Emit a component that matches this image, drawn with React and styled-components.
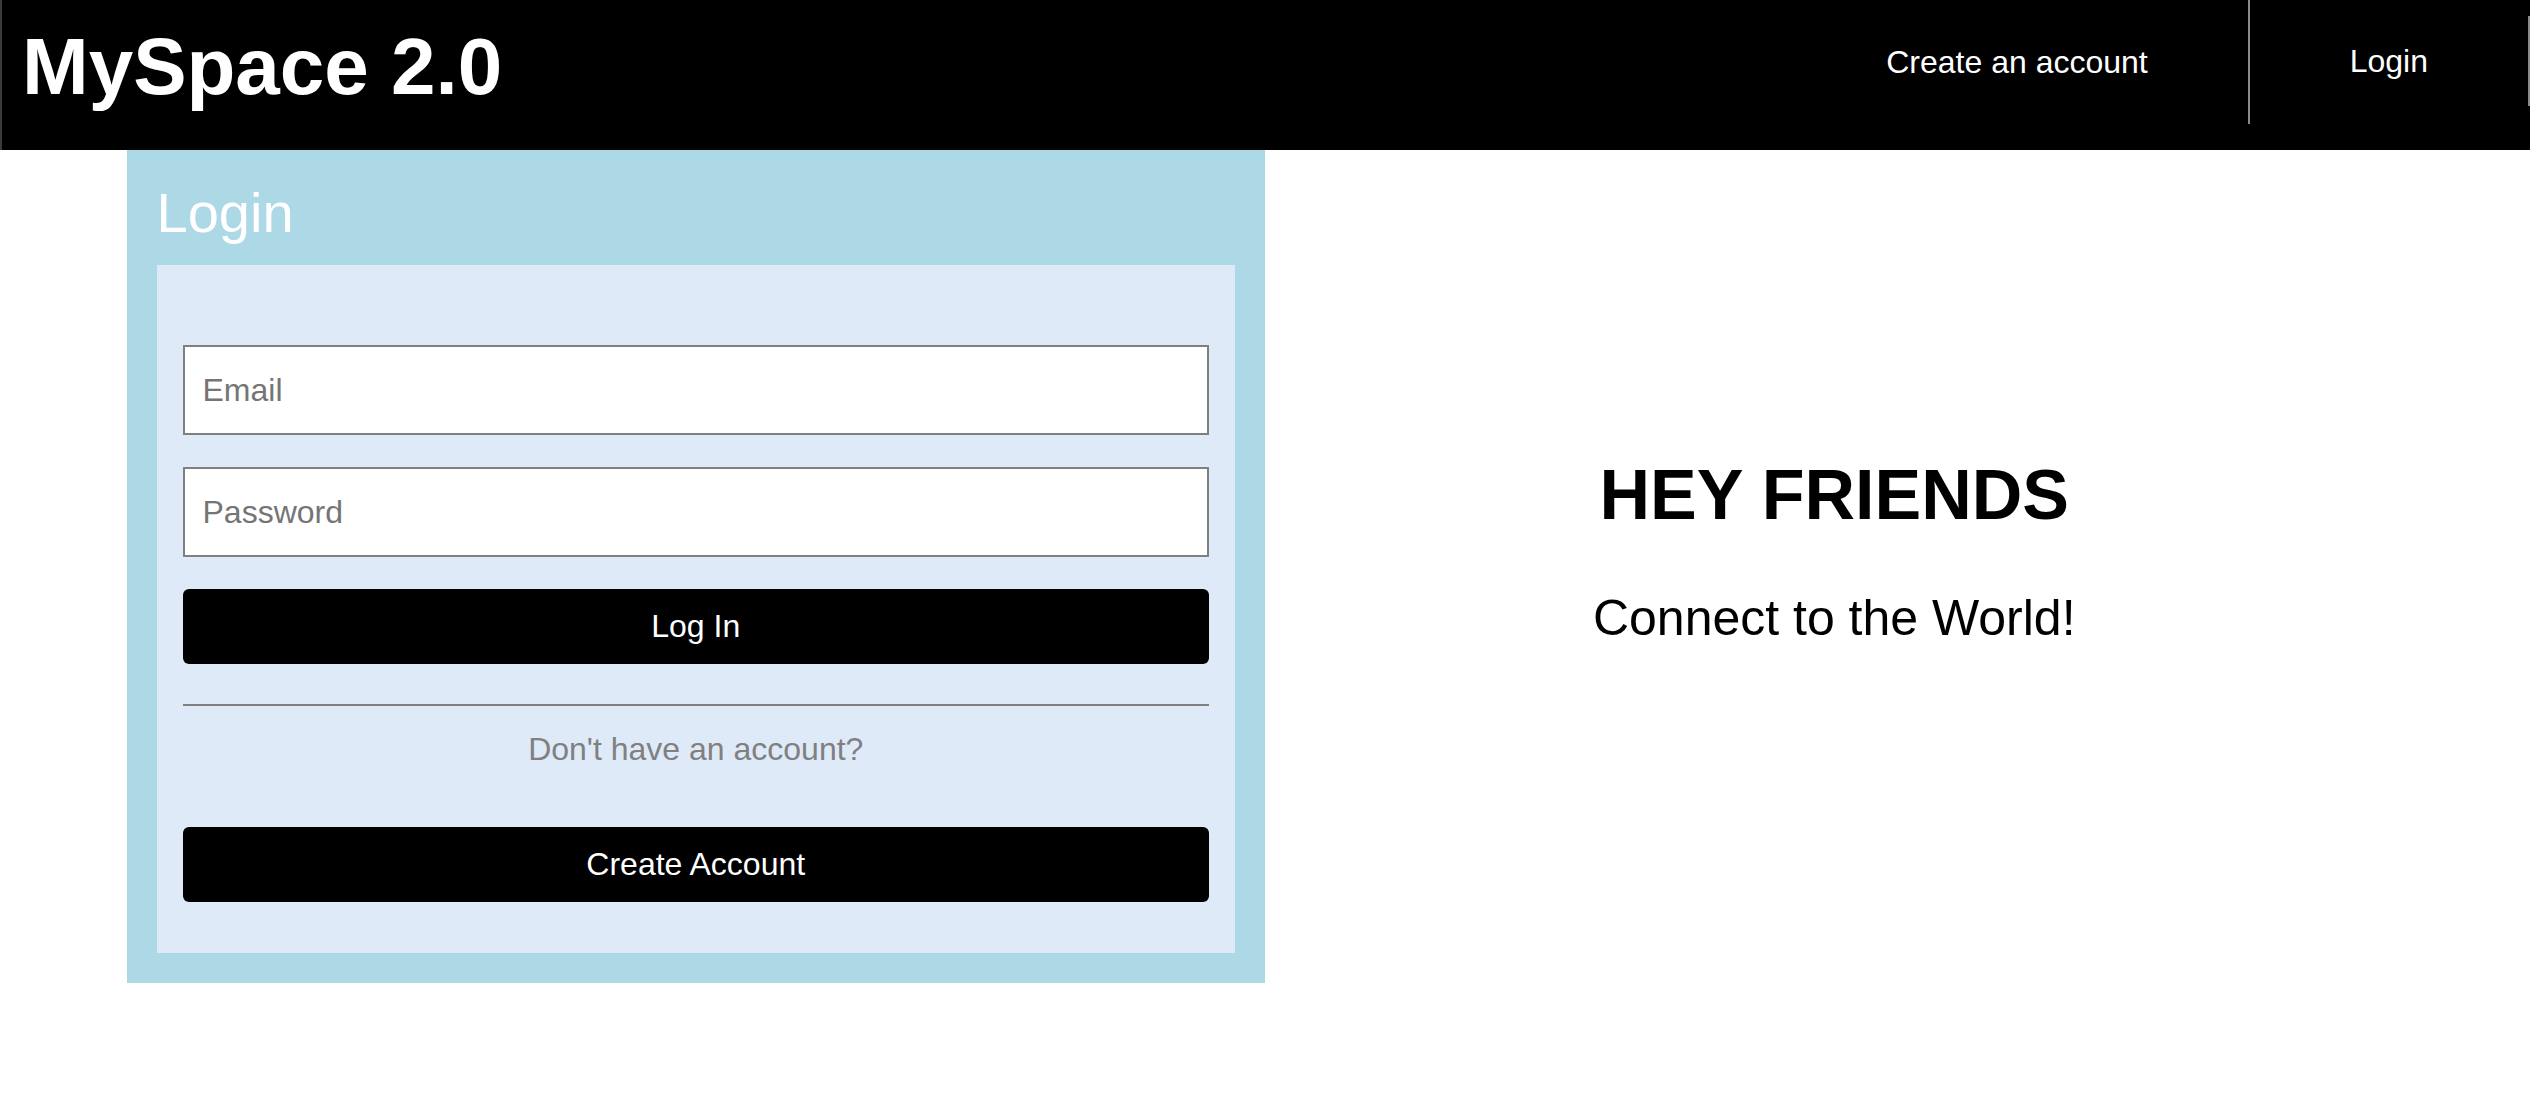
import styled, { createGlobalStyle } from "styled-components";

const GlobalStyle = createGlobalStyle`
  body {
    margin: 0;
    background: #fff;
    font-family: "Liberation Sans", Arial, Helvetica, sans-serif;
  }
  * {
    box-sizing: border-box;
  }
`;

const Header = styled.header`
  display: flex;
  justify-content: space-between;
  align-items: flex-start;
  height: 150px;
  background: #000;
  border-left: 2px solid #3a3a3a;
`;

const Brand = styled.h1`
  margin: 21px 0 0 20px;
  color: #fff;
  font-size: 80px;
  font-weight: 700;
  line-height: normal;
`;

const Nav = styled.nav`
  display: flex;
  align-items: flex-start;
`;

const NavItem = styled.a`
  display: flex;
  align-items: center;
  justify-content: center;
  height: ${(p) => (p.$short ? "90px" : "124px")};
  margin-top: ${(p) => (p.$short ? "16px" : "0")};
  padding: 0 100px;
  border-right: 2px solid #8a8a8a;
  color: #fff;
  font-size: 32px;
  text-decoration: none;
  white-space: nowrap;
  cursor: pointer;
`;

const Main = styled.main`
  display: flex;
`;

const Card = styled.section`
  width: 45%;
  margin-left: 5%;
  padding: 30px;
  background: #add8e6;
`;

const CardTitle = styled.h2`
  margin: 0 0 20px;
  color: #fff;
  font-size: 56px;
  font-weight: 400;
  line-height: normal;
`;

const Panel = styled.form`
  display: flex;
  flex-direction: column;
  padding: 80px 26px 51px 26px;
  background: #dfeaf9;
`;

const Input = styled.input`
  height: 90px;
  margin-bottom: 32px;
  padding: 0 18px;
  border: 2px solid #808080;
  background: #fff;
  font-family: inherit;
  font-size: 32px;
  color: #000;
  outline: none;

  &::placeholder {
    color: #757575;
  }
`;

const Button = styled.button`
  height: 75px;
  border: none;
  border-radius: 6px;
  background: #000;
  color: #fff;
  font-family: inherit;
  font-size: 32px;
  cursor: pointer;
`;

const Divider = styled.hr`
  margin: 40px 0 0;
  border: none;
  border-top: 2px solid #808080;
`;

const Hint = styled.p`
  margin: 25px 0 59px;
  color: #808080;
  font-size: 32px;
  text-align: center;
`;

const Welcome = styled.section`
  display: flex;
  flex-direction: column;
  justify-content: center;
  align-items: center;
  width: 45%;
  padding-bottom: 32px;
  gap: 54px;
`;

const Headline = styled.h2`
  margin: 0;
  font-size: 70px;
  font-weight: 700;
  line-height: normal;
`;

const Tagline = styled.p`
  margin: 0;
  font-size: 50px;
  line-height: normal;
`;

export default function App() {
  return (
    <>
      <GlobalStyle />
      <Header>
        <Brand>MySpace 2.0</Brand>
        <Nav>
          <NavItem>Create an account</NavItem>
          <NavItem $short>Login</NavItem>
        </Nav>
      </Header>
      <Main>
        <Card>
          <CardTitle>Login</CardTitle>
          <Panel onSubmit={(e) => e.preventDefault()}>
            <Input type="email" placeholder="Email" />
            <Input type="password" placeholder="Password" />
            <Button type="submit">Log In</Button>
            <Divider />
            <Hint>Don't have an account?</Hint>
            <Button type="button">Create Account</Button>
          </Panel>
        </Card>
        <Welcome>
          <Headline>HEY FRIENDS</Headline>
          <Tagline>Connect to the World!</Tagline>
        </Welcome>
      </Main>
    </>
  );
}
